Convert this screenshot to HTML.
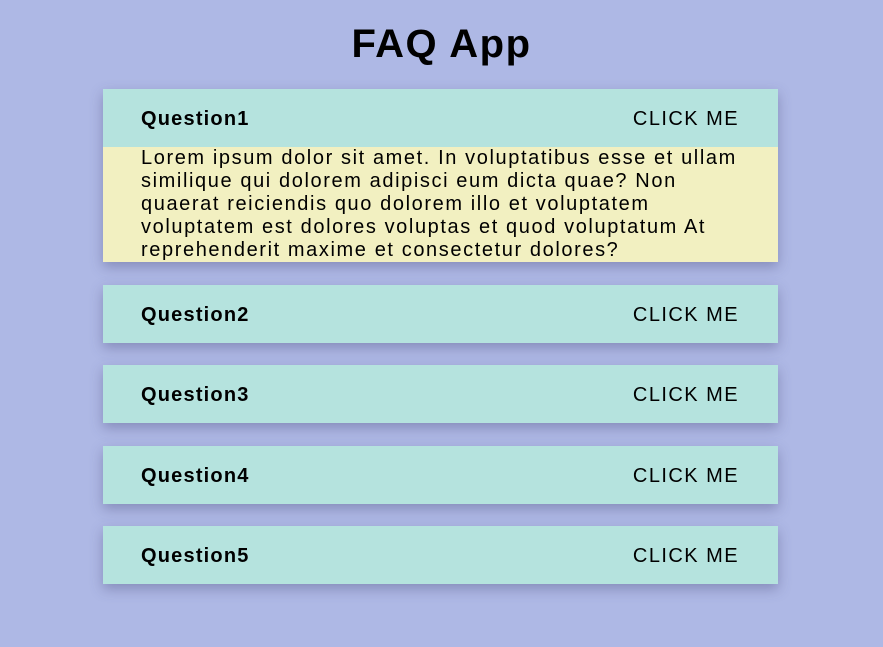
<!DOCTYPE html>
<html><head><style>
body{margin:0;background:#aeb8e5;font-family:"Liberation Sans",Arial,sans-serif;width:883px;height:647px;overflow:hidden}
h1{margin:0;position:absolute;top:22px;width:883px;text-align:center;font-size:40px;font-weight:bold;letter-spacing:1.5px}
.box{position:absolute;left:103px;width:675px;box-shadow:0 5px 12px rgba(60,60,110,0.35)}
.q{height:58px;background:#b5e3de;display:flex;align-items:center;justify-content:space-between;padding:2px 39px 0 38px;box-sizing:border-box;font-size:20px;line-height:20px;letter-spacing:1.2px}
.q b{font-weight:bold}
.q span{font-size:20px;letter-spacing:1.45px;line-height:20px}
.a{background:#f2f0c1;padding:0 38px;font-size:20px;line-height:23px;letter-spacing:1.6px;height:115px;box-sizing:border-box}
</style></head><body>
<h1>FAQ App</h1>
<div class="box" style="top:89px"><div class="q"><b>Question1</b><span>CLICK ME</span></div>
<div class="a">Lorem ipsum dolor sit amet. In voluptatibus esse et ullam similique qui dolorem adipisci eum dicta quae? Non quaerat reiciendis quo dolorem illo et voluptatem voluptatem est dolores voluptas et quod voluptatum At reprehenderit maxime et consectetur dolores?</div></div>
<div class="box" style="top:285px"><div class="q"><b>Question2</b><span>CLICK ME</span></div></div>
<div class="box" style="top:365px"><div class="q"><b>Question3</b><span>CLICK ME</span></div></div>
<div class="box" style="top:446px"><div class="q"><b>Question4</b><span>CLICK ME</span></div></div>
<div class="box" style="top:526px"><div class="q"><b>Question5</b><span>CLICK ME</span></div></div>
</body></html>
